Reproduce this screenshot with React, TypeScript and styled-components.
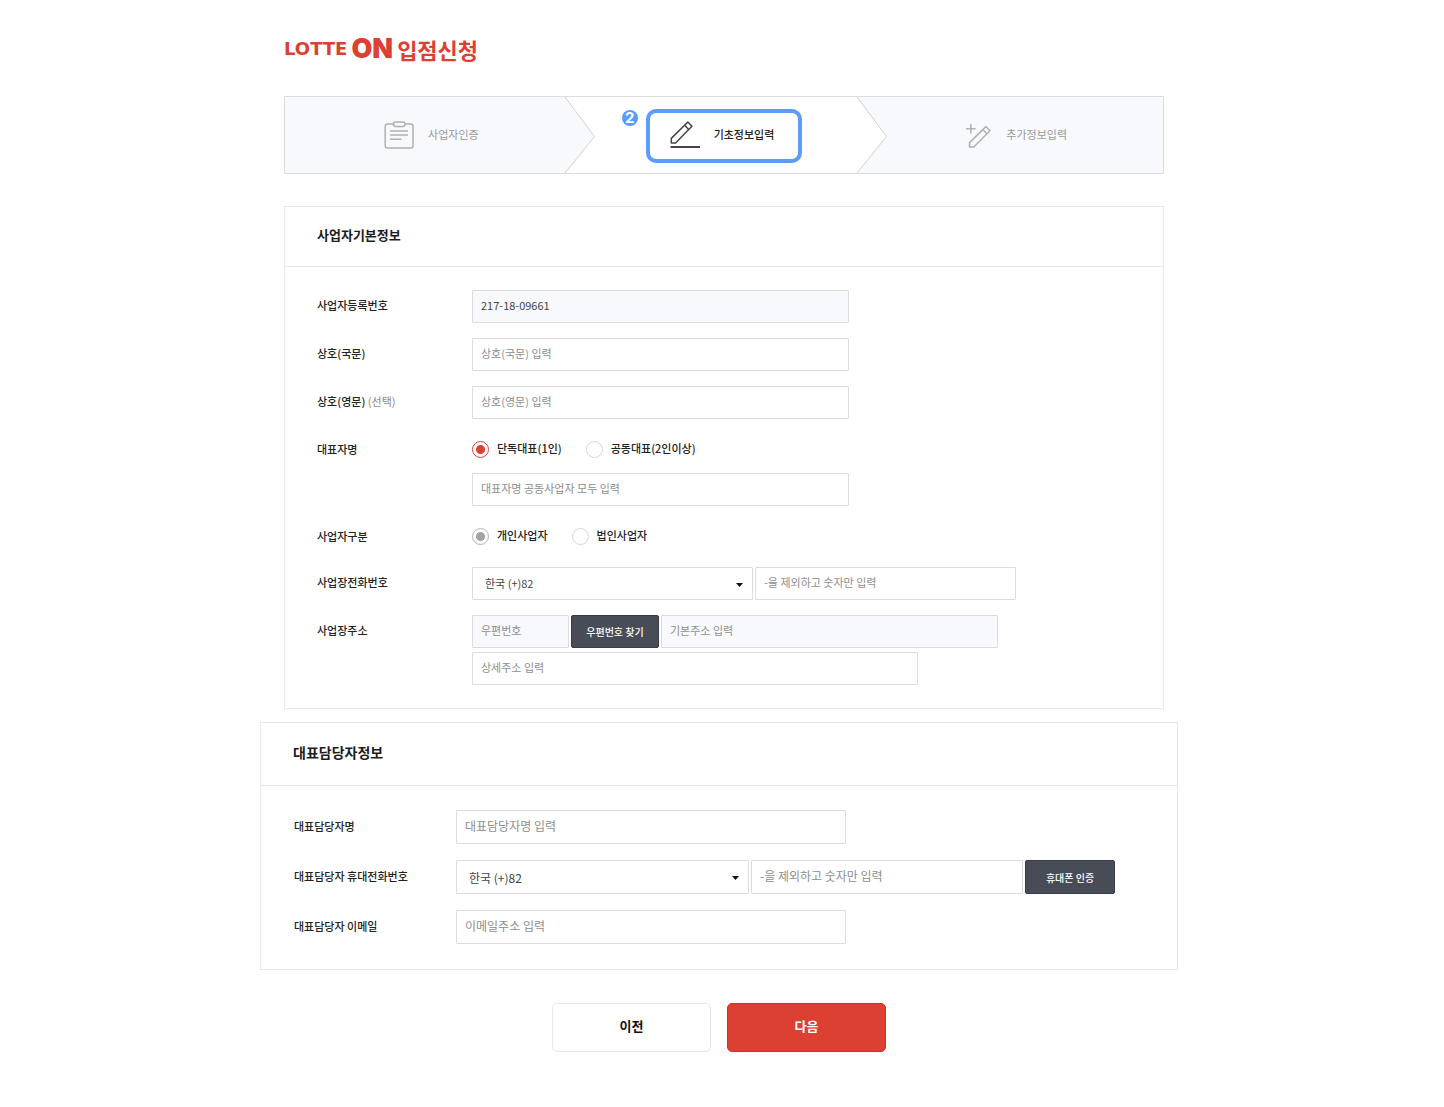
import React from "react";
import styled, { createGlobalStyle, css } from "styled-components";

const GlobalStyle = createGlobalStyle`
  *, *::before, *::after { box-sizing: border-box; }
  body {
    margin: 0;
    background: #fff;
    color: #222;
    font-family: "Noto Sans CJK KR", sans-serif;
    font-size: 11px;
    line-height: 16px;
  }
  h1, h2, ol { margin: 0; padding: 0; }
  button, input, select { margin: 0; font: inherit; }
`;

const Page = styled.main`
  display: flex;
  flex-direction: column;
  padding: 32px 0 55px;
`;

/* Centred column; the basic and contact sections have their own gutters. */
const Column = styled.div<{ $wide?: boolean }>`
  display: flex;
  flex-direction: column;
  width: 100%;
  max-width: ${(p) => (p.$wide ? 972 : 932)}px;
  margin: 0 auto;
  padding: ${(p) => (p.$wide ? "0 30px 0 24px" : "0 24px 0 28px")};
`;

const Brand = styled.h1`
  display: flex;
  align-items: center;
  gap: 4px;
  height: 34px;
  margin-bottom: 30px;
  color: #dc4033;
`;

const BrandLotte = styled.span`
  font: 700 18px/32px "DejaVu Sans", sans-serif;
`;

const BrandOn = styled.span`
  font: 900 27px/32px Inter, sans-serif;
`;

const BrandTitle = styled.span`
  font-size: 22px;
  font-weight: 700;
  line-height: 32px;
`;

const Steps = styled.ol`
  display: grid;
  grid-template-columns: repeat(3, 1fr);
  height: 78px;
  margin-bottom: 32px;
  border: 1px solid #dcdcdc;
  list-style: none;
`;

const Step = styled.li<{ $active?: boolean }>`
  position: relative;
  display: flex;
  align-items: center;
  justify-content: center;
  padding-top: 2px;
  background: ${(p) => (p.$active ? "#fff" : "#f8f9fd")};
  color: ${(p) => (p.$active ? "#222" : "#999")};
`;

const StepContent = styled.div<{ $active?: boolean }>`
  position: relative;
  display: flex;
  align-items: center;
  gap: 14px;
  padding-bottom: 4px;
  ${(p) =>
    p.$active &&
    css`
      height: 54px;
      padding: 0 24px 4px 20px;
      border: 4px solid #5b9bfb;
      border-radius: 10px;
      font-weight: 500;
    `}
`;

const StepIcon = styled.svg`
  display: block;
  flex: none;
  margin-top: 1px;
  fill: none;
  stroke-width: 1.5;
  stroke-linejoin: round;
`;

const StepBadge = styled.span`
  position: absolute;
  top: -3px;
  left: -28px;
  width: 16px;
  height: 16px;
  border-radius: 50%;
  background: #5b9bfb;
  color: #fff;
  font: 700 15px/16px Inter, sans-serif;
  text-align: center;
`;

const Chevron = styled.svg`
  position: absolute;
  top: 0;
  right: -17px;
  z-index: 1;
  width: 30px;
  height: 76px;
`;

const Panel = styled.section`
  border: 1px solid #e8e8e8;
`;

const PanelTitle = styled.h2<{ $large?: boolean }>`
  padding: 0 32px 3px;
  border-bottom: 1px solid #e8e8e8;
  color: #1c1c1c;
  font-size: ${(p) => (p.$large ? 14 : 13)}px;
  font-weight: 700;
  line-height: ${(p) => (p.$large ? 59 : 56)}px;
`;

const Rows = styled.div<{ $large?: boolean }>`
  display: flex;
  flex-direction: column;
  gap: ${(p) => (p.$large ? 16 : 15)}px;
  padding: ${(p) => (p.$large ? "24px 32px 25px 33px" : "23px 32px")};
`;

const Row = styled.div<{ $large?: boolean }>`
  display: grid;
  grid-template-columns: ${(p) => (p.$large ? 162 : 155)}px minmax(0, 1fr);
  line-height: ${(p) => (p.$large ? 33 : 31)}px;
`;

const labelText = css`
  color: #222;
  font-weight: 500;
`;

const Label = styled.label`
  ${labelText}
`;

const GroupLabel = styled.span`
  ${labelText}
`;

const Optional = styled.span`
  color: #8a8a8a;
  font-weight: 400;
`;

const Fields = styled.div<{ $gap?: number }>`
  display: flex;
  flex-direction: column;
  gap: ${(p) => p.$gap ?? 4}px;
`;

const Line = styled.div`
  display: flex;
  gap: 2px;
`;

const box = css<{ $large?: boolean }>`
  height: ${(p) => (p.$large ? 34 : 33)}px;
  min-width: 0;
  border: 1px solid #dcdcdc;
  border-radius: 1px;
  background: #fff;
  color: #444;
  font-size: ${(p) => (p.$large ? 12 : 11)}px;
`;

const TextInput = styled.input<{ $width: number; $large?: boolean }>`
  ${box}
  width: 100%;
  max-width: ${(p) => p.$width}px;
  padding: 0 8px 3px;
  &:read-only { background: #f8f9fd; }
  &::placeholder { color: #8e8e8e; opacity: 1; }
`;

const SelectWrap = styled.div<{ $width: number }>`
  position: relative;
  width: 100%;
  max-width: ${(p) => p.$width}px;
`;

const Select = styled.select<{ $large?: boolean }>`
  ${box}
  display: block;
  width: 100%;
  padding: 0 24px 2px 12px;
  appearance: none;
`;

const Caret = styled.svg`
  position: absolute;
  top: 50%;
  right: 10px;
  width: 7px;
  height: 4px;
  margin-top: -1px;
  fill: #111;
  pointer-events: none;
`;

const DarkButton = styled.button<{ $large?: boolean }>`
  flex: none;
  width: ${(p) => (p.$large ? 90 : 88)}px;
  height: ${(p) => (p.$large ? 34 : 33)}px;
  padding: 0 0 2px;
  border: 1px solid #343b49;
  border-radius: 2px;
  background: #474c57;
  color: #fff;
  font-size: 10px;
  font-weight: 500;
  cursor: pointer;
`;

const RadioGroup = styled.div`
  display: flex;
  flex: none;
  align-items: center;
  gap: 24px;
  height: 31px;
  line-height: 16px;
`;

const RadioLabel = styled.label`
  display: flex;
  align-items: center;
  gap: 8px;
  color: #222;
  font-weight: 500;
`;

const RadioText = styled.span`
  padding-bottom: 3px;
`;

const Radio = styled.input`
  width: 17px;
  height: 17px;
  border: 1px solid #d6d6d6;
  border-radius: 50%;
  background: #fff;
  appearance: none;
  &:checked {
    border-color: #dc4033;
    background: radial-gradient(circle, #dc4033 4px, #fff 5px);
  }
  &:checked:disabled {
    border-color: #b4b4b4;
    background: radial-gradient(circle, #a3a3a3 4px, #fff 5px);
  }
`;

const Actions = styled.div`
  display: flex;
  justify-content: center;
  gap: 16px;
  margin-top: 33px;
`;

const ActionButton = styled.button<{ $primary?: boolean }>`
  width: 159px;
  height: 49px;
  padding: 0 0 3px;
  border: 1px solid ${(p) => (p.$primary ? "#da2d20" : "#e8e8e8")};
  border-radius: 5px;
  background: ${(p) => (p.$primary ? "#dc4033" : "#fff")};
  color: ${(p) => (p.$primary ? "#fff" : "#111")};
  font-size: 13px;
  font-weight: 700;
  cursor: pointer;
`;

const Gap = styled.div`
  height: 13px;
`;

function StepArrow({ from, to }: { from: string; to: string }) {
  return (
    <Chevron viewBox="0 0 30 76" aria-hidden="true">
      <rect width="30" height="76" fill={to} />
      <polygon points="0,0 29.5,39.5 0,76" fill={from} />
      <polyline points="0,0 29.5,39.5 0,76" fill="none" stroke="#cfcfcf" />
    </Chevron>
  );
}

function ClipboardIcon() {
  return (
    <StepIcon width="30" height="28" viewBox="0 0 30 28" stroke="#b0b0b0" aria-hidden="true">
      <path d="M9.5 3H3.5A2.3 2.3 0 0 0 1.2 5.3v19.4A2.3 2.3 0 0 0 3.5 27h23.2a2.3 2.3 0 0 0 2.3-2.3V5.3A2.3 2.3 0 0 0 26.7 3H21" />
      <rect x="9.5" y="1" width="11.5" height="4.4" rx="2.2" />
      <path d="M6 10h18M6 14h18M6 18.2h11.5" />
    </StepIcon>
  );
}

function PenIcon() {
  return (
    <StepIcon width="30" height="28" viewBox="0 0 30 28" stroke="#444" aria-hidden="true">
      <path d="M1.3 22v-4.6L17.9 1l4 4.2L5.6 22zM14.6 4.3l4.1 4.2" />
      <path d="M.5 26h29.5" strokeWidth="2" />
    </StepIcon>
  );
}

function PlusPencilIcon() {
  return (
    <StepIcon width="26" height="28" viewBox="0 0 26 28" stroke="#b0b0b0" aria-hidden="true">
      <path d="M0 7.7h9.6M4.8 3v9.5" />
      <path d="M3.5 26v-4.4L19.9 5.6l4.1 4.2L7.8 26zM16.9 8.5l4.1 4.2" />
    </StepIcon>
  );
}

function CountrySelect({ id, width, large }: { id: string; width: number; large?: boolean }) {
  return (
    <SelectWrap $width={width}>
      <Select id={id} $large={large} defaultValue="82">
        <option value="82">한국 (+)82</option>
      </Select>
      <Caret viewBox="0 0 7 4" aria-hidden="true">
        <path d="M0 0h7L3.5 4z" />
      </Caret>
    </SelectWrap>
  );
}

export default function App() {
  return (
    <>
      <GlobalStyle />
      <Page>
        <Column>
          <Brand>
            <BrandLotte>LOTTE</BrandLotte>
            <BrandOn>ON</BrandOn>
            <BrandTitle>입점신청</BrandTitle>
          </Brand>

          <Steps>
            <Step>
              <StepContent>
                <ClipboardIcon />
                <span>사업자인증</span>
              </StepContent>
              <StepArrow from="#f8f9fd" to="#fff" />
            </Step>
            <Step $active aria-current="step">
              <StepContent $active>
                <StepBadge>2</StepBadge>
                <PenIcon />
                <span>기초정보입력</span>
              </StepContent>
              <StepArrow from="#fff" to="#f8f9fd" />
            </Step>
            <Step>
              <StepContent>
                <PlusPencilIcon />
                <span>추가정보입력</span>
              </StepContent>
            </Step>
          </Steps>

          <Panel>
            <PanelTitle>사업자기본정보</PanelTitle>
            <Rows>
              <Row>
                <Label htmlFor="biz-number">사업자등록번호</Label>
                <TextInput id="biz-number" $width={377} defaultValue="217-18-09661" readOnly />
              </Row>
              <Row>
                <Label htmlFor="name-ko">상호(국문)</Label>
                <TextInput id="name-ko" $width={377} placeholder="상호(국문) 입력" />
              </Row>
              <Row>
                <Label htmlFor="name-en">
                  상호(영문) <Optional>(선택)</Optional>
                </Label>
                <TextInput id="name-en" $width={377} placeholder="상호(영문) 입력" />
              </Row>
              <Row>
                <Label htmlFor="owner">대표자명</Label>
                <Fields $gap={8}>
                  <RadioGroup role="radiogroup" aria-label="대표자명">
                    <RadioLabel>
                      <Radio type="radio" name="owner-type" defaultChecked />
                      <RadioText>단독대표(1인)</RadioText>
                    </RadioLabel>
                    <RadioLabel>
                      <Radio type="radio" name="owner-type" />
                      <RadioText>공동대표(2인이상)</RadioText>
                    </RadioLabel>
                  </RadioGroup>
                  <TextInput id="owner" $width={377} placeholder="대표자명 공동사업자 모두 입력" />
                </Fields>
              </Row>
              <Row>
                <GroupLabel id="biz-type">사업자구분</GroupLabel>
                <RadioGroup role="radiogroup" aria-labelledby="biz-type">
                  <RadioLabel>
                    <Radio type="radio" name="biz-type" defaultChecked disabled />
                    <RadioText>개인사업자</RadioText>
                  </RadioLabel>
                  <RadioLabel>
                    <Radio type="radio" name="biz-type" disabled />
                    <RadioText>법인사업자</RadioText>
                  </RadioLabel>
                </RadioGroup>
              </Row>
              <Row>
                <Label htmlFor="biz-country">사업장전화번호</Label>
                <Line>
                  <CountrySelect id="biz-country" width={281} />
                  <TextInput $width={261} aria-label="사업장전화번호" placeholder="-을 제외하고 숫자만 입력" />
                </Line>
              </Row>
              <Row>
                <Label htmlFor="zip">사업장주소</Label>
                <Fields>
                  <Line>
                    <TextInput id="zip" $width={97} placeholder="우편번호" readOnly />
                    <DarkButton type="button">우편번호 찾기</DarkButton>
                    <TextInput $width={337} aria-label="기본주소" placeholder="기본주소 입력" readOnly />
                  </Line>
                  <TextInput $width={446} aria-label="상세주소" placeholder="상세주소 입력" />
                </Fields>
              </Row>
            </Rows>
          </Panel>
        </Column>

        <Gap />

        <Column $wide>
          <Panel>
            <PanelTitle $large>대표담당자정보</PanelTitle>
            <Rows $large>
              <Row $large>
                <Label htmlFor="manager">대표담당자명</Label>
                <TextInput id="manager" $large $width={390} placeholder="대표담당자명 입력" />
              </Row>
              <Row $large>
                <Label htmlFor="manager-country">대표담당자 휴대전화번호</Label>
                <Line>
                  <CountrySelect id="manager-country" width={293} large />
                  <TextInput $large $width={272} aria-label="휴대전화번호" placeholder="-을 제외하고 숫자만 입력" />
                  <DarkButton type="button" $large>휴대폰 인증</DarkButton>
                </Line>
              </Row>
              <Row $large>
                <Label htmlFor="manager-email">대표담당자 이메일</Label>
                <TextInput id="manager-email" type="email" $large $width={390} placeholder="이메일주소 입력" />
              </Row>
            </Rows>
          </Panel>

          <Actions>
            <ActionButton type="button">이전</ActionButton>
            <ActionButton type="button" $primary>다음</ActionButton>
          </Actions>
        </Column>
      </Page>
    </>
  );
}
